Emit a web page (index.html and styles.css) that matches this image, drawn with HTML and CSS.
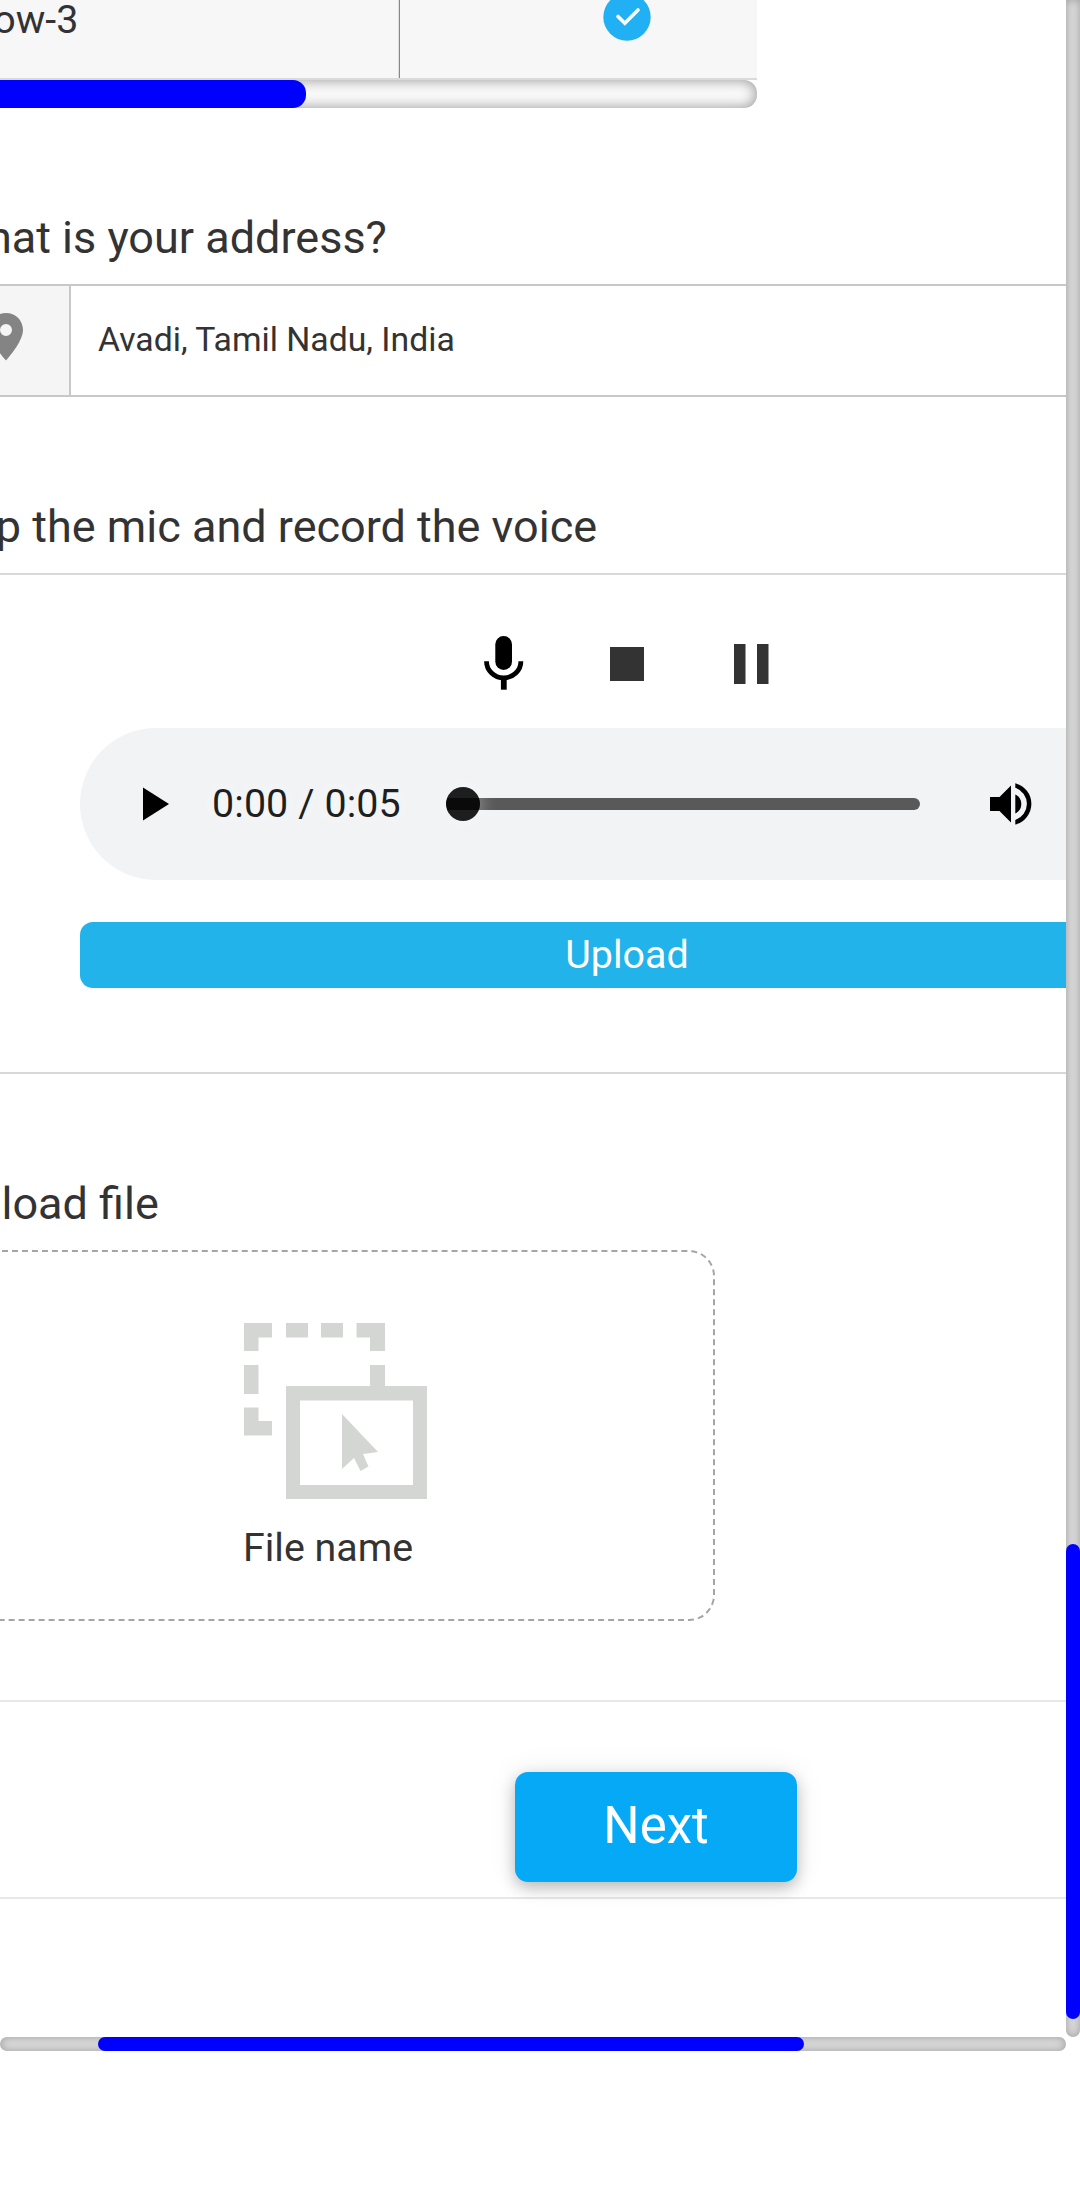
FILE: index.html
```html
<!DOCTYPE html>
<html lang="en">
<head>
<meta charset="utf-8">
<title>Form</title>
<link rel="stylesheet" href="styles.css">
</head>
<body>
<div class="viewport">
  <main class="form">
    <section class="table">
      <div class="table-row">
        <div class="cell cell-label">Row-3</div>
        <div class="cell cell-check">
          <svg class="check" width="48" height="48" viewBox="0 0 48 48"><circle cx="24" cy="24" r="23.7" fill="#20b0f3"/><path d="M15 23.500l6.800 6.800L35 17" fill="none" stroke="#fff" stroke-width="3.600" stroke-linecap="round"/></svg>
        </div>
      </div>
      <div class="table-scroll"><div class="table-thumb"></div></div>
    </section>

    <section class="question address">
      <h2 class="title">What is your address?</h2>
      <div class="address-field">
        <div class="address-icon">
          <svg width="34" height="48" viewBox="0 0 34 48"><path fill="#848484" fill-rule="evenodd" d="M17 0C7.600 0 0 7.400 0 16.800 0 29.400 17 47.500 17 47.500S34 29.400 34 16.800C34 7.400 26.400 0 17 0zm0 11a6 6 0 1 1 0 12 6 6 0 0 1 0-12z"/></svg>
        </div>
        <div class="address-text">Avadi, Tamil Nadu, India</div>
      </div>
    </section>

    <section class="question voice">
      <h2 class="title">Tap the mic and record the voice</h2>
      <div class="recorder">
        <div class="controls">
          <svg width="40" height="54" viewBox="0 0 40 54"><rect x="11.300" y="0" width="16.700" height="34" rx="8.350" /><path d="M2.500 25.200a17.200 16.700 0 0 0 34.400 0" fill="none" stroke="#000" stroke-width="4.800"/><path d="M16.900 43h5.800v10.700h-5.800z"/></svg>
          <svg width="34" height="34" viewBox="0 0 34 34"><path fill="#333" d="M0 0h34v34H0z"/></svg>
          <svg width="35" height="40" viewBox="0 0 35 40"><path fill="#333" d="M0 0h11.500v40H0zM23 0h11.500v40H23z"/></svg>
        </div>
        <div class="player">
          <svg class="play" width="26" height="34" viewBox="0 0 26 34"><path d="M0 .5L26 17 0 33.500z"/></svg>
          <span class="time">0:00 / 0:05</span>
          <div class="track"><div class="knob"></div></div>
          <svg class="volume" width="42" height="42" viewBox="0 0 42 42"><path d="M0 14h9.500L21 2.500v37L9.500 28H0zM25.300 11.500a10.500 10.500 0 0 1 0 19z"/><path d="M25.300 .2A21.300 21.300 0 0 1 25.300 41.500V36.900A16.900 16.900 0 0 0 25.300 4.800z"/></svg>
        </div>
        <button class="upload" type="button">Upload</button>
      </div>
    </section>

    <section class="question file">
      <h2 class="title">Upload file</h2>
      <div class="dropzone">
        <svg width="184" height="177" viewBox="0 0 184 177"><path fill="#d4d6d3" fill-rule="evenodd" d="M0 0h28v14.500H14.500V28H0zM42 0h22v14.500H42zM77 0h22v14.500H77zM112.500 0H141v28h-15V14.500h-13.500zM0 42h14.500v29H0zM126 42h15v21h-15zM0 84.500h14.500V98H28v14.500H0zM42 63h141v113H42zM56 77.500V162h113V77.500z"/><path fill="#d4d6d3" d="M98 91l36 38-15 2 5.500 12.500-8 4.500-6.500-13L98 146z"/></svg>
        <span class="file-name">File name</span>
      </div>
    </section>

    <section class="actions"><button class="next" type="button">Next</button></section>
  </main>
  <div class="vbar"><div class="vthumb"></div></div>
</div>
<div class="hbar"><div class="hthumb"></div></div>
</body>
</html>
```
FILE: styles.css
```css
* { box-sizing: border-box; }
body { margin: 0; width: 1080px; height: 2208px; overflow: hidden; background: #fff; color: #333; font-family: Roboto, "Noto Sans", sans-serif; }
button { display: block; border: 0; padding: 0; font-family: inherit; color: #fff; text-align: center; }
svg { display: block; flex: none; }

.viewport { display: flex; height: 2037px; overflow: hidden; }
.form { width: 1066px; flex: none; overflow: hidden; }

.table { width: 757px; }
.table-row { display: flex; height: 80px; background: #f7f7f7; border-bottom: 2px solid #dadada; }
.cell-label { width: 400px; height: 78px; border-right: 1px solid #888; box-shadow: inset -1px 0 #ddd; font-size: 39.400px; line-height: 40px; text-indent: -31px; white-space: nowrap; }
.cell-check { flex: 1; display: flex; justify-content: center; padding-left: 97px; }
.check { margin-top: -7px; }
.table-scroll { height: 28px; border-radius: 0 13px 13px 0; background: #fafafa; box-shadow: inset 0 0 14px rgba(0, 0, 0, .42); overflow: hidden; }
.table-thumb { width: 306px; height: 28px; border-radius: 0 13px 13px 0; background: #00f; }

.title { margin: 0 0 0 -53px; font-size: 45px; line-height: 60px; font-weight: 400; white-space: nowrap; }
.address { padding-top: 100px; }
.address-field { display: flex; height: 113px; margin-top: 16px; border-top: 2px solid #c8c8c8; border-bottom: 2px solid #c8c8c8; }
.address-icon { width: 71px; background: #f5f5f5; border-right: 2px solid #c8c8c8; padding-top: 27px; }
.address-icon svg { margin-left: -11px; }
.address-text { padding-left: 27px; font-size: 33.750px; line-height: 108px; }

.voice { padding-top: 100px; }
.recorder { height: 501px; margin-top: 16px; border-top: 2px solid #d8d8d8; border-bottom: 2px solid #d8d8d8; padding: 61px 0 0 80px; }
.controls { display: flex; align-items: center; height: 54px; padding-left: 404px; gap: 88px; }
.controls svg + svg { margin-top: 2px; }
.controls svg:nth-child(2) { margin-left: -2px; margin-right: 2px; }
.player { display: flex; align-items: center; width: 1094px; height: 152px; margin-top: 38px; padding-left: 63px; border-radius: 76px; background: #f1f3f4; }
.time { width: 234px; margin-left: 43px; font-size: 39.400px; letter-spacing: .1px; line-height: 46px; color: #1f1f1f; white-space: nowrap; text-shadow: 0 0 18px #fff; }
.track { width: 474px; height: 12px; border-radius: 6px; background: #595959; display: flex; align-items: center; }
.knob { width: 34px; height: 34px; flex: none; border-radius: 50%; background: linear-gradient(#1e1e1e 11px, #0a0a0a 11px 23px, #1e1e1e 23px); box-shadow: 0 0 18px rgba(255, 255, 255, .45); }
.volume { margin-left: 70px; }
.upload { width: 1094px; height: 66px; margin-top: 42px; border-radius: 13px; background: #21b3e9; font-size: 39.400px; line-height: 66px; }

.file { padding-top: 100px; }
.dropzone { display: flex; flex-direction: column; width: 759px; height: 371px; margin: 16px 0 0 -44px; border: 2px dashed #a5a5a5; border-radius: 26px; padding: 71px 0 0 286px; }
.file-name { margin: 23px 0 0 -1px; font-size: 39.400px; line-height: 50px; }
.actions { height: 199px; margin-top: 79px; border-top: 2px solid #e8e8e8; border-bottom: 2px solid #e8e8e8; padding: 70px 0 0 515px; }
.next { width: 282px; height: 110px; border-radius: 13px; background: #05a9f6; box-shadow: 0 6px 15px rgba(0, 0, 0, .24), 0 0 30px rgba(0, 0, 0, .08); font-size: 51px; line-height: 106px; padding-bottom: 3px; }

.vbar { width: 14px; flex: none; padding-top: 1544px; background: #d9d9d9; border-radius: 0 0 7px 7px; box-shadow: inset 0 0 8px rgba(0, 0, 0, .27); }
.vthumb { height: 475px; border-radius: 7px; background: #00f; }
.hbar { width: 1066px; height: 14px; padding-left: 98px; border-radius: 7px; background: #d9d9d9; box-shadow: inset 0 0 8px rgba(0, 0, 0, .27); }
.hthumb { width: 706px; height: 14px; border-radius: 7px; background: #00f; }
```
